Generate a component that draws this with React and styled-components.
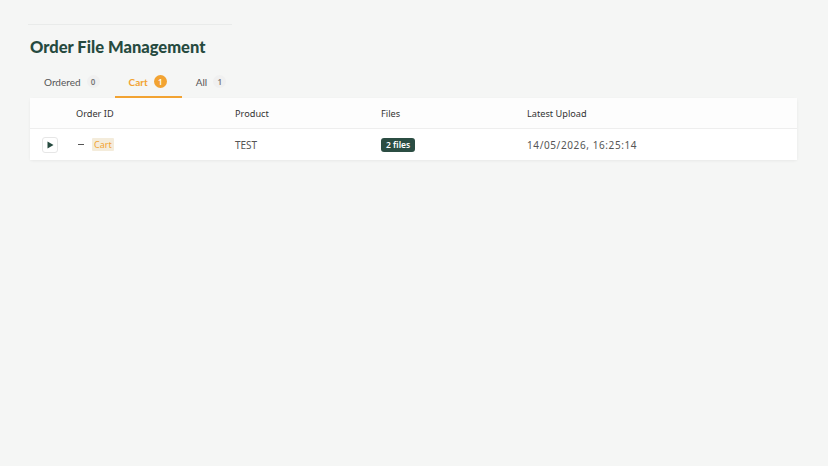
import React from "react";
import styled, { createGlobalStyle } from "styled-components";

const Global = createGlobalStyle`
  html, body { margin: 0; padding: 0; }
  body {
    background: #f5f6f5;
    font-family: "Noto Sans", "Open Sans", sans-serif;
    color: #333;
    min-height: 466px;
  }
`;

const Page = styled.div`
  padding: 24px 31px 0 30px;
`;

const TopRule = styled.div`
  width: 204px;
  margin-left: -2px;
  border-top: 1px solid #e9ebea;
`;

const Title = styled.h1`
  margin: 11px 0 0 0;
  font-family: Lato, "Noto Sans", sans-serif;
  font-size: 16.5px;
  font-weight: 900;
  color: #264a3f;
  line-height: 22px;
`;

const Tabs = styled.div`
  display: flex;
  margin-top: 12px;
  height: 28px;
`;

const Tab = styled.div`
  display: flex;
  align-items: center;
  gap: 6px;
  padding: 0 15px 3px 14px;
  font-family: Lato, "Noto Sans", sans-serif;
  font-size: 10px;
  color: ${p => (p.$active ? "#f2a332" : "#555")};
  font-weight: ${p => (p.$active ? 700 : 400)};
  border-bottom: 2px solid ${p => (p.$active ? "#f2a332" : "transparent")};
  box-sizing: border-box;
`;

const Count = styled.span`
  display: inline-flex;
  align-items: center;
  justify-content: center;
  min-width: 13px;
  height: 13px;
  border-radius: 7px;
  font-family: "Noto Sans", sans-serif;
  font-size: 8px;
  font-weight: 600;
  background: ${p => (p.$active ? "#f2a332" : "#f0f0f0")};
  color: ${p => (p.$active ? "#fff" : "#777")};
`;

const Card = styled.div`
  background: #fff;
  box-shadow: 0 1px 3px rgba(0, 0, 0, 0.06);
  border-radius: 2px;
`;

const Row = styled.div`
  display: grid;
  grid-template-columns: 46px 159px 146px 146px 1fr;
  align-items: center;
  height: ${p => (p.$head ? "30px" : "31px")};
  background: ${p => (p.$head ? "#fdfdfd" : "#fff")};
  border-bottom: ${p => (p.$head ? "1px solid #eeeeee" : "none")};
  font-size: ${p => (p.$head ? "9.2px" : "10px")};
  color: ${p => (p.$head ? "#333" : "#555")};
`;

const Cell = styled.div`
  display: flex;
  align-items: center;
  gap: 8px;
  letter-spacing: ${p => p.$spacing || "normal"};
`;

const ExpandBtn = styled.button`
  margin-left: 12px;
  width: 16px;
  height: 16px;
  padding: 0;
  border: 1px solid #e6e6e6;
  border-radius: 3px;
  background: #fff;
  display: flex;
  align-items: center;
  justify-content: center;
`;

const Dash = styled.span`
  display: inline-block;
  width: 6px;
  height: 1.5px;
  background: #555;
  margin-left: 2px;
`;

const StatusTag = styled.span`
  background: #f4ecdb;
  color: #f2a332;
  font-size: 9px;
  padding: 0 2px;
  line-height: 13px;
  border-radius: 1px;
`;

const FilesBadge = styled.span`
  background: #2b4d43;
  color: #fff;
  font-size: 8.5px;
  font-weight: 600;
  padding: 0 5px;
  line-height: 14px;
  border-radius: 3px;
`;

export default function App() {
  return (
    <>
      <Global />
      <Page>
        <TopRule />
        <Title>Order File Management</Title>
        <Tabs>
          <Tab>
            Ordered <Count>0</Count>
          </Tab>
          <Tab $active>
            Cart <Count $active>1</Count>
          </Tab>
          <Tab>
            All <Count>1</Count>
          </Tab>
        </Tabs>
        <Card>
          <Row $head>
            <Cell />
            <Cell>Order ID</Cell>
            <Cell>Product</Cell>
            <Cell>Files</Cell>
            <Cell>Latest Upload</Cell>
          </Row>
          <Row>
            <Cell>
              <ExpandBtn>
                <svg width="7" height="8" viewBox="0 0 7 8">
                  <path d="M0.5 0.5 L6.5 4 L0.5 7.5 Z" fill="#264a3f" />
                </svg>
              </ExpandBtn>
            </Cell>
            <Cell>
              <Dash />
              <StatusTag>Cart</StatusTag>
            </Cell>
            <Cell>TEST</Cell>
            <Cell>
              <FilesBadge>2 files</FilesBadge>
            </Cell>
            <Cell $spacing="0.6px">14/05/2026, 16:25:14</Cell>
          </Row>
        </Card>
      </Page>
    </>
  );
}
